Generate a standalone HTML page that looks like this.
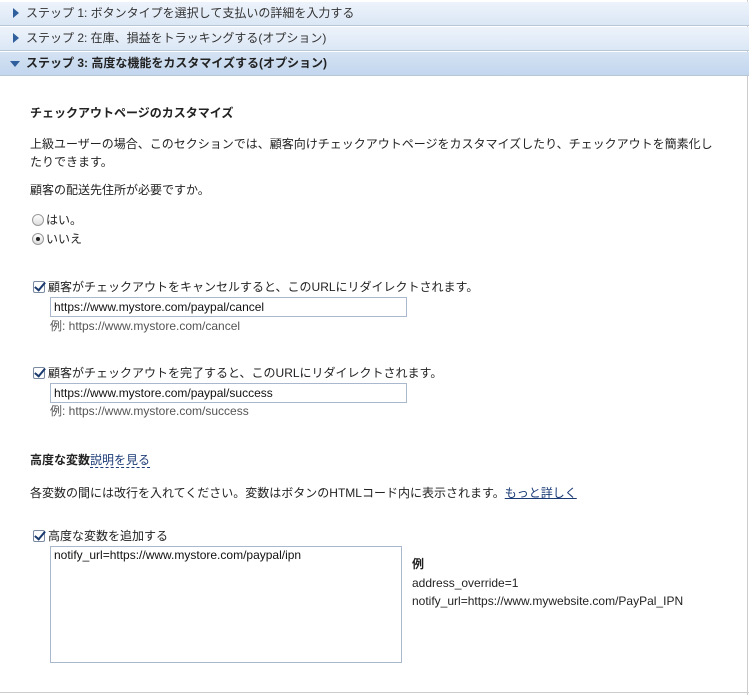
<!DOCTYPE html>
<html><head><meta charset="utf-8"><style>
*{margin:0;padding:0;box-sizing:border-box}
body{width:749px;height:695px;background:#fff;font-family:"Liberation Sans","Noto Sans CJK JP",sans-serif;font-size:12px;color:#222;position:relative;overflow:hidden}
.a{position:absolute;white-space:nowrap;line-height:16px}
.h{position:absolute;left:0;width:749px;height:24px;background:linear-gradient(#edf3fb,#dbe7f5);border-bottom:1px solid #b9c6d6;font-size:12px;color:#333;padding-left:26px;line-height:23px}
.h3{background:linear-gradient(#d5e3f3,#c2d6ee);font-weight:bold;color:#222}
.tri{position:absolute;left:13px;top:6px;width:0;height:0;border-left:6px solid #2f5f9c;border-top:5px solid transparent;border-bottom:5px solid transparent}
.trd{position:absolute;left:10px;top:9px;width:0;height:0;border-top:6px solid #2f5f9c;border-left:5px solid transparent;border-right:5px solid transparent}
.in{position:absolute;border:1px solid #a9b8cc;background:#fff;font-size:12px;padding:1px 3px;line-height:16px;color:#111}
.cb{position:absolute;width:12px;height:12px;border:1px solid #7a8aa0;border-radius:2px;background:#fff}
.cb:after{content:"";position:absolute;left:3px;top:-2px;width:4px;height:9px;border:solid #1b3b6f;border-width:0 2px 2px 0;transform:rotate(40deg)}
.rd{position:absolute;width:12px;height:12px;border:1px solid #999;border-radius:50%;background:linear-gradient(#fff,#ddd)}
.g{color:#555}
</style></head><body>
<div style="position:absolute;right:1px;top:0;width:1px;height:695px;background:#ccc"></div>
<div style="position:absolute;left:0;top:692px;width:749px;height:1px;background:#ccc"></div>
<div class="h" style="top:2px"><span class="tri"></span>ステップ 1: ボタンタイプを選択して支払いの詳細を入力する</div>
<div class="h" style="top:27px"><span class="tri"></span>ステップ 2: 在庫、損益をトラッキングする(オプション)</div>
<div class="h h3" style="top:52px"><span class="trd"></span>ステップ 3: 高度な機能をカスタマイズする(オプション)</div>

<div class="a" style="left:30px;top:105px;font-weight:bold">チェックアウトページのカスタマイズ</div>
<div class="a" style="left:30px;top:136px">上級ユーザーの場合、このセクションでは、顧客向けチェックアウトページをカスタマイズしたり、チェックアウトを簡素化し</div>
<div class="a" style="left:30px;top:154px">たりできます。</div>
<div class="a" style="left:30px;top:182px">顧客の配送先住所が必要ですか。</div>
<div class="rd" style="left:32px;top:214px"></div><div class="a" style="left:46px;top:212px">はい。</div>
<div class="rd" style="left:32px;top:233px"><span style="position:absolute;left:3px;top:3px;width:4px;height:4px;border-radius:50%;background:#222"></span></div><div class="a" style="left:46px;top:231px">いいえ</div>

<div class="cb" style="left:33px;top:281px"></div><div class="a" style="left:48px;top:279px">顧客がチェックアウトをキャンセルすると、このURLにリダイレクトされます。</div>
<div class="in" style="left:50px;top:297px;width:357px;height:20px">https://www.mystore.com/paypal/cancel</div>
<div class="a g" style="left:50px;top:318px">例: https://www.mystore.com/cancel</div>

<div class="cb" style="left:33px;top:367px"></div><div class="a" style="left:48px;top:365px">顧客がチェックアウトを完了すると、このURLにリダイレクトされます。</div>
<div class="in" style="left:50px;top:383px;width:357px;height:20px">https://www.mystore.com/paypal/success</div>
<div class="a g" style="left:50px;top:403px">例: https://www.mystore.com/success</div>

<div class="a" style="left:30px;top:452px"><b>高度な変数</b><span style="color:#1a3a75;border-bottom:1px dashed #1a3a75">説明を見る</span></div>
<div class="a" style="left:30px;top:485px">各変数の間には改行を入れてください。変数はボタンのHTMLコード内に表示されます。<span style="color:#1a3a75;text-decoration:underline">もっと詳しく</span></div>

<div class="cb" style="left:33px;top:530px"></div><div class="a" style="left:48px;top:528px">高度な変数を追加する</div>
<div class="in" style="left:50px;top:546px;width:352px;height:117px;padding-top:0">notify_url=https://www.mystore.com/paypal/ipn</div>
<div class="a" style="left:412px;top:556px;font-weight:bold">例</div>
<div class="a" style="left:412px;top:575px">address_override=1</div>
<div class="a" style="left:412px;top:593px">notify_url=https://www.mywebsite.com/PayPal_IPN</div>
</body></html>
